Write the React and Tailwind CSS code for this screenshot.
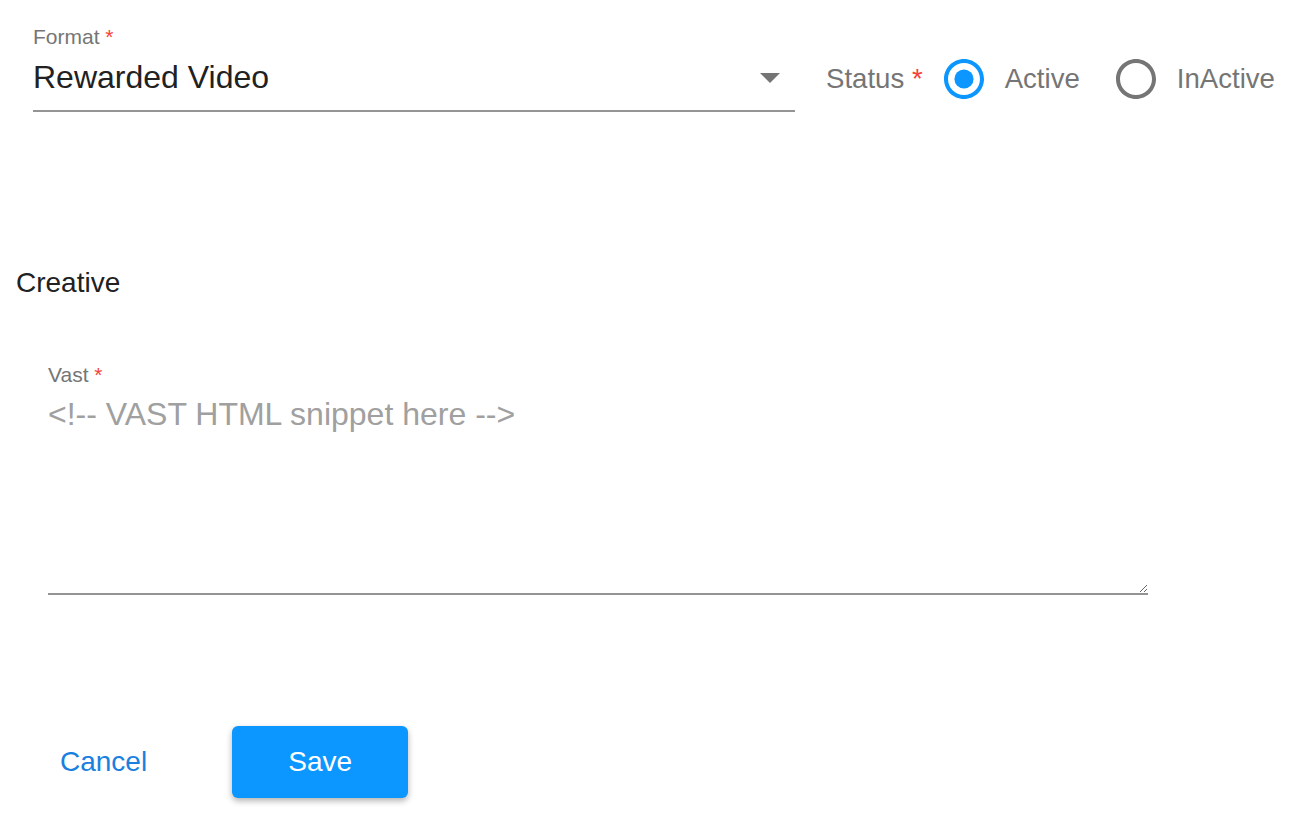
import React from "react";

function Radio({ checked }) {
  return (
    <svg width="48" height="48" viewBox="0 0 24 24" className="shrink-0">
      {checked ? (
        <>
          <path
            fill="#0b97ff"
            d="M12 2C6.48 2 2 6.48 2 12s4.48 10 10 10 10-4.48 10-10S17.52 2 12 2zm0 18c-4.42 0-8-3.58-8-8s3.58-8 8-8 8 3.58 8 8-3.58 8-8 8z"
          />
          <circle cx="12" cy="12" r="4.8" fill="#0b97ff" />
        </>
      ) : (
        <path
          fill="#757575"
          d="M12 2C6.48 2 2 6.48 2 12s4.48 10 10 10 10-4.48 10-10S17.52 2 12 2zm0 18c-4.42 0-8-3.58-8-8s3.58-8 8-8 8 3.58 8 8-3.58 8-8 8z"
        />
      )}
    </svg>
  );
}

export default function App() {
  return (
    <div
      className="w-[1304px] h-[830px] bg-white overflow-hidden"
      style={{ fontFamily: '"Liberation Sans", Arial, sans-serif' }}
    >
      {/* Top row */}
      <div className="flex items-start pl-[33px]">
        <div className="w-[762px] flex flex-col">
          <div className="mt-[25px] h-[24px] leading-[24px] text-[21px] text-[#757575]">
            Format<span className="text-[#f44336]"> *</span>
          </div>
          <div className="mt-[4px] flex items-center justify-between pb-[9px] border-b-2 border-[#949494]">
            <span className="h-[48px] leading-[48px] text-[32px] text-[#212121]">Rewarded Video</span>
            <svg width="48" height="48" viewBox="0 0 24 24" className="mr-[1px]">
              <path d="M7 10l5 5 5-5z" fill="#757575" />
            </svg>
          </div>
        </div>
        <div className="ml-[31px] mt-[55px] h-[48px] flex items-center text-[27.6px] text-[#757575]">
          <span>
            Status<span className="text-[#f44336]"> *</span>
          </span>
          <div className="ml-[17px] flex items-center">
            <Radio checked />
            <span className="ml-[17px]">Active</span>
          </div>
          <div className="ml-[32px] flex items-center">
            <Radio />
            <span className="ml-[17px]">InActive</span>
          </div>
        </div>
      </div>

      {/* Creative */}
      <div className="mt-[155px] pl-[16px] h-[32px] leading-[32px] text-[28px] text-[#212121]">Creative</div>

      {/* Vast */}
      <div className="mt-[64px] pl-[48px]">
        <div className="h-[24px] leading-[24px] text-[21px] text-[#757575]">
          Vast<span className="text-[#f44336]"> *</span>
        </div>
        <div className="mt-[7px] w-[1100px] border-b-2 border-[#949494] flex">
          <textarea
            className="w-full h-[199px] p-0 m-0 block outline-none border-0 leading-[40px] text-[32px] text-[#212121] placeholder:text-[#a0a0a0] resize-y bg-transparent"
            style={{ fontFamily: '"Liberation Sans", Arial, sans-serif' }}
            placeholder="<!-- VAST HTML snippet here -->"
          />
        </div>
      </div>

      {/* Buttons */}
      <div className="mt-[131px] flex items-center pl-[60px]">
        <button className="text-[28px] text-[#1a80e0] bg-transparent">Cancel</button>
        <button className="ml-[85px] w-[176px] h-[72px] rounded-[6px] bg-[#0b97ff] text-white text-[28px] shadow-[0_3px_6px_rgba(0,0,0,0.3)]">
          Save
        </button>
      </div>
    </div>
  );
}
